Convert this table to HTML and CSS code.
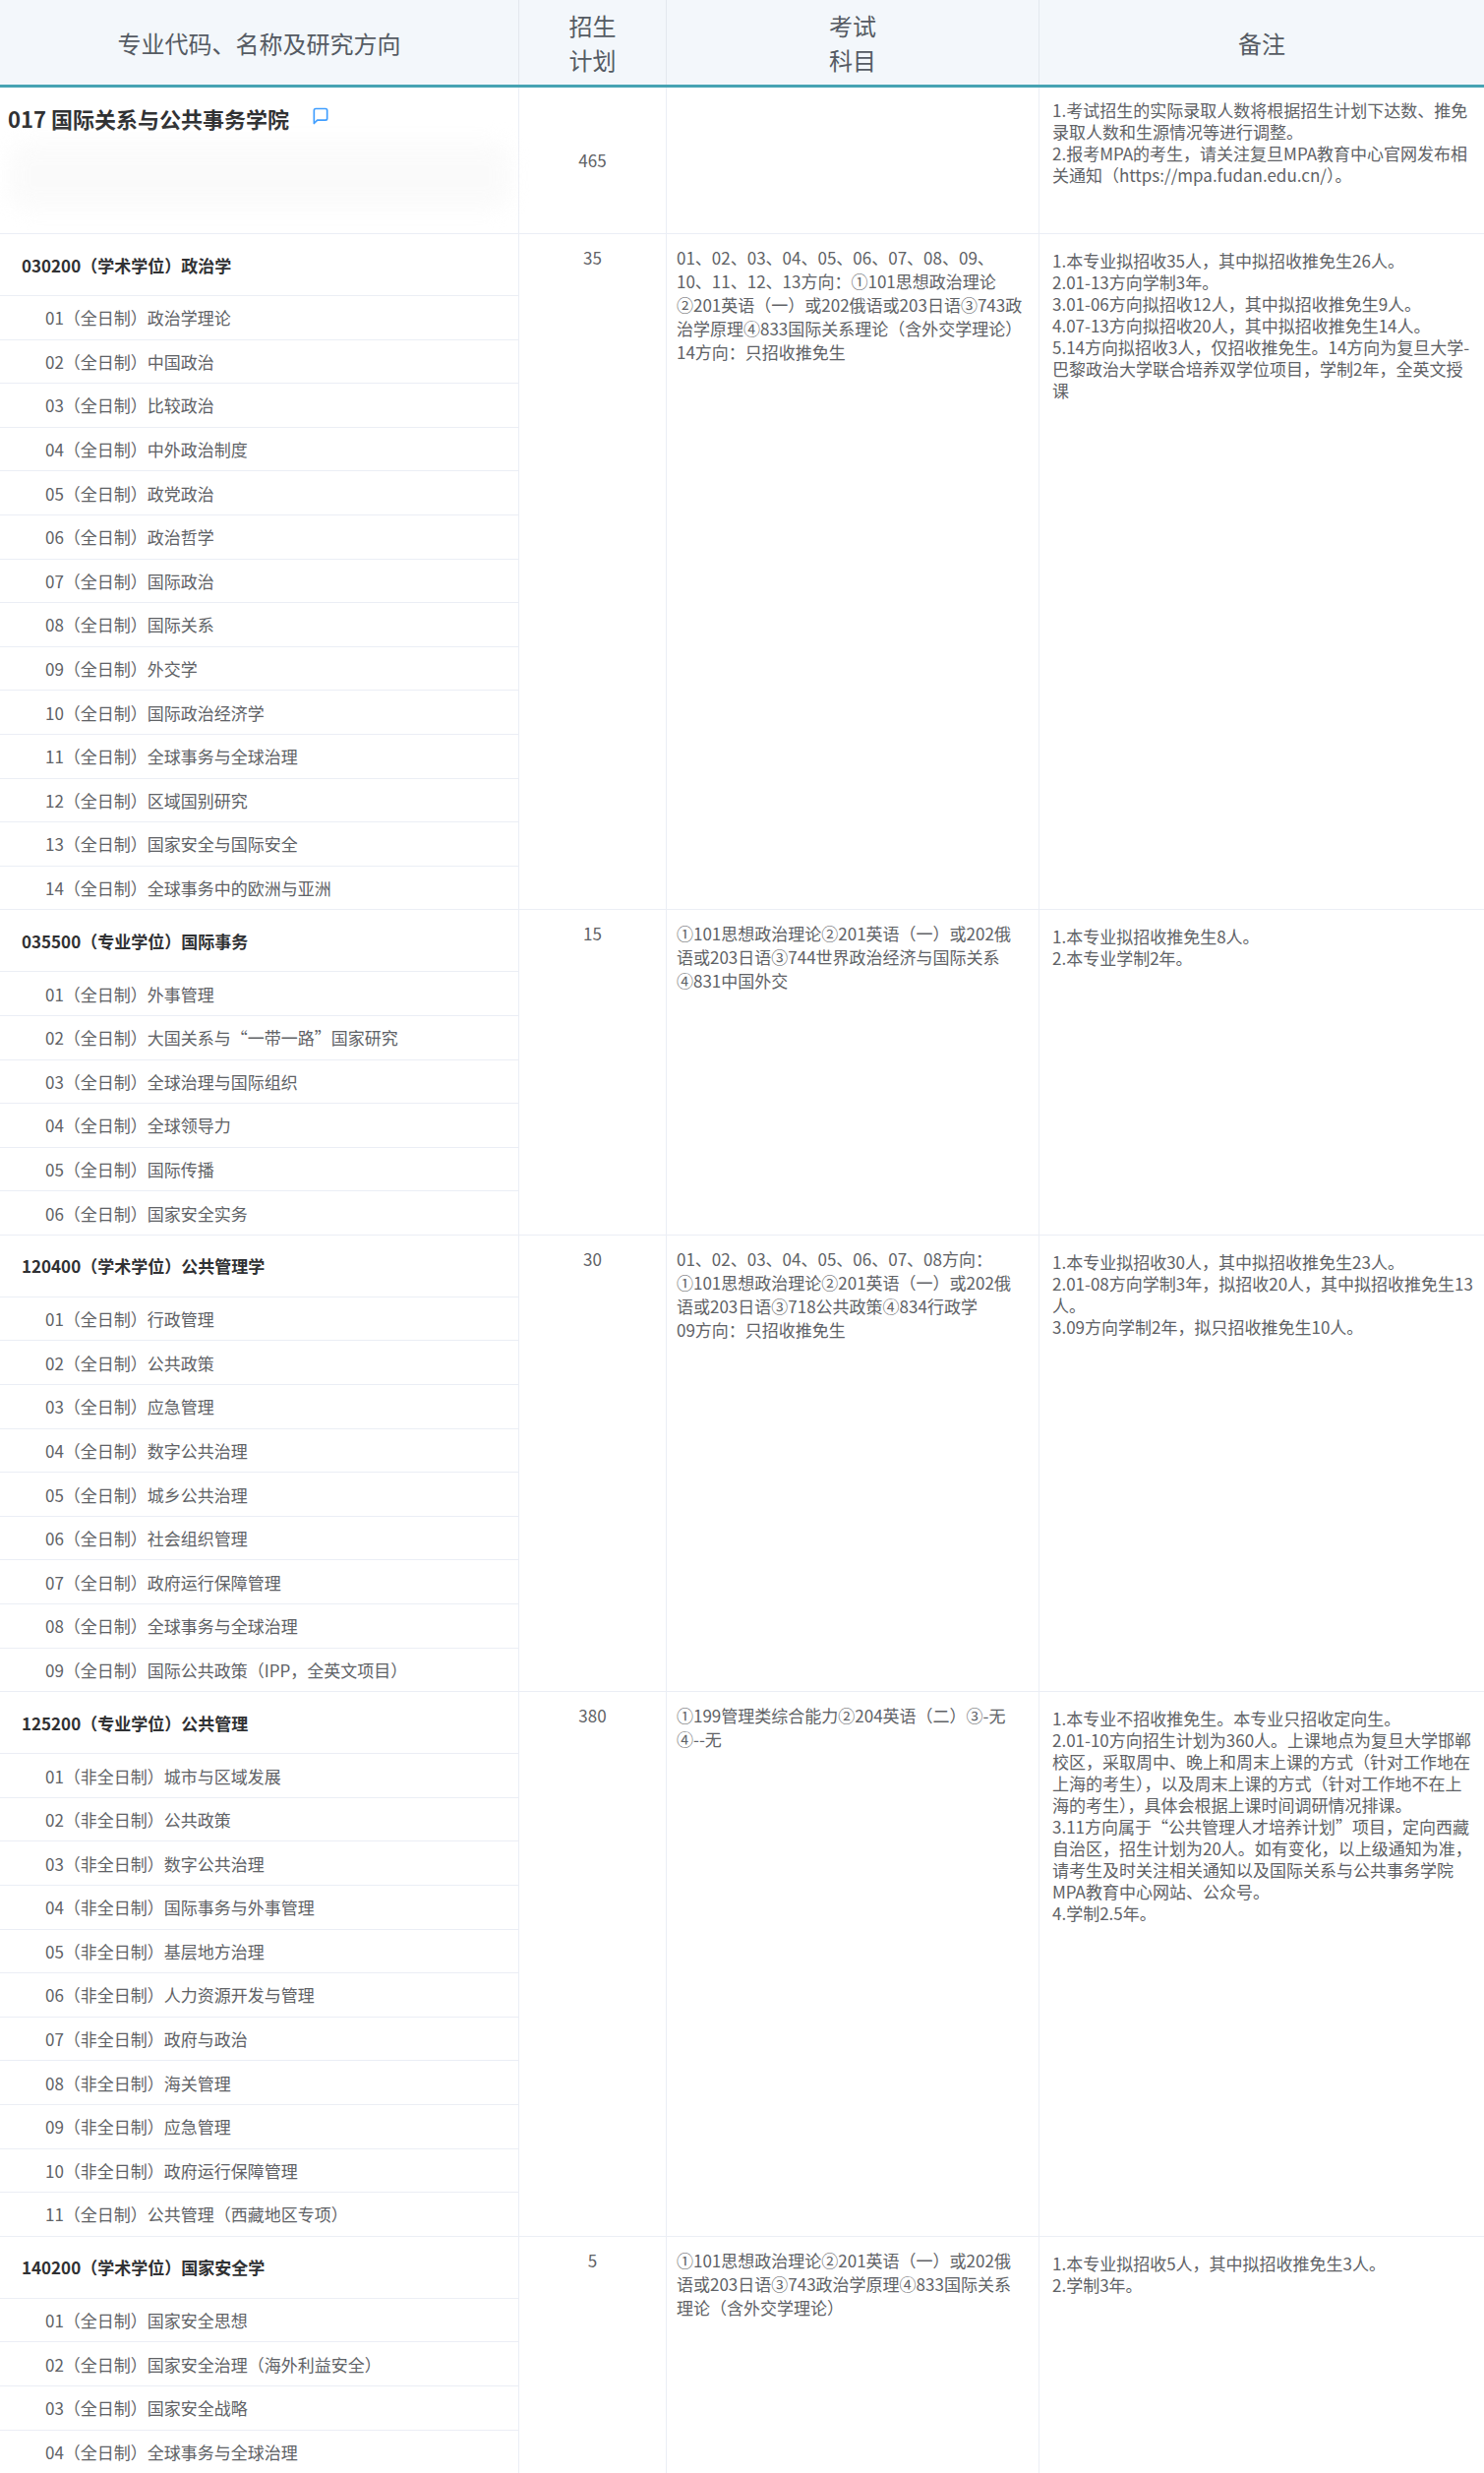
FILE: index.html
```html
<!DOCTYPE html>
<html lang="zh-CN">
<head>
<meta charset="utf-8">
<title>专业目录</title>
<link rel="stylesheet" href="styles.css">
</head>
<body>
<div class="table">
  <div class="row thead">
    <div class="th">专业代码、名称及研究方向</div>
    <div class="th">招生<br>计划</div>
    <div class="th">考试<br>科目</div>
    <div class="th">备注</div>
  </div>

  <div class="row school">
    <div class="cell school-name">
      <div class="school-title">017 国际关系与公共事务学院
        <svg class="icon-msg" viewBox="0 0 24 24" width="20" height="20"><path d="M20 15a2 2 0 0 1-2 2H8l-4 4V5a2 2 0 0 1 2-2h12a2 2 0 0 1 2 2z" fill="none" stroke="#409eff" stroke-width="2" stroke-linejoin="round"/></svg>
      </div>
      <div class="blur"></div>
    </div>
    <div class="cell plan plan-center">465</div>
    <div class="cell exam"></div>
    <div class="cell note note-school">1.考试招生的实际录取人数将根据招生计划下达数、推免<br>录取人数和生源情况等进行调整。<br>2.报考MPA的考生，请关注复旦MPA教育中心官网发布相<br>关通知（https://mpa.fudan.edu.cn/）。</div>
  </div>

  <div class="row block">
    <div class="cell names">
      <div class="major">030200（学术学位）政治学</div>
      <div class="dir">01（全日制）政治学理论</div>
      <div class="dir">02（全日制）中国政治</div>
      <div class="dir">03（全日制）比较政治</div>
      <div class="dir">04（全日制）中外政治制度</div>
      <div class="dir">05（全日制）政党政治</div>
      <div class="dir">06（全日制）政治哲学</div>
      <div class="dir">07（全日制）国际政治</div>
      <div class="dir">08（全日制）国际关系</div>
      <div class="dir">09（全日制）外交学</div>
      <div class="dir">10（全日制）国际政治经济学</div>
      <div class="dir">11（全日制）全球事务与全球治理</div>
      <div class="dir">12（全日制）区域国别研究</div>
      <div class="dir">13（全日制）国家安全与国际安全</div>
      <div class="dir">14（全日制）全球事务中的欧洲与亚洲</div>
    </div>
    <div class="cell plan">35</div>
    <div class="cell exam">01、02、03、04、05、06、07、08、09、<br>10、11、12、13方向：①101思想政治理论<br>②201英语（一）或202俄语或203日语③743政<br>治学原理④833国际关系理论（含外交学理论）<br>14方向：只招收推免生</div>
    <div class="cell note">1.本专业拟招收35人，其中拟招收推免生26人。<br>2.01-13方向学制3年。<br>3.01-06方向拟招收12人，其中拟招收推免生9人。<br>4.07-13方向拟招收20人，其中拟招收推免生14人。<br>5.14方向拟招收3人，仅招收推免生。14方向为复旦大学-<br>巴黎政治大学联合培养双学位项目，学制2年，全英文授<br>课</div>
  </div>

  <div class="row block">
    <div class="cell names">
      <div class="major">035500（专业学位）国际事务</div>
      <div class="dir">01（全日制）外事管理</div>
      <div class="dir">02（全日制）大国关系与“一带一路”国家研究</div>
      <div class="dir">03（全日制）全球治理与国际组织</div>
      <div class="dir">04（全日制）全球领导力</div>
      <div class="dir">05（全日制）国际传播</div>
      <div class="dir">06（全日制）国家安全实务</div>
    </div>
    <div class="cell plan">15</div>
    <div class="cell exam">①101思想政治理论②201英语（一）或202俄<br>语或203日语③744世界政治经济与国际关系<br>④831中国外交</div>
    <div class="cell note">1.本专业拟招收推免生8人。<br>2.本专业学制2年。</div>
  </div>

  <div class="row block">
    <div class="cell names">
      <div class="major">120400（学术学位）公共管理学</div>
      <div class="dir">01（全日制）行政管理</div>
      <div class="dir">02（全日制）公共政策</div>
      <div class="dir">03（全日制）应急管理</div>
      <div class="dir">04（全日制）数字公共治理</div>
      <div class="dir">05（全日制）城乡公共治理</div>
      <div class="dir">06（全日制）社会组织管理</div>
      <div class="dir">07（全日制）政府运行保障管理</div>
      <div class="dir">08（全日制）全球事务与全球治理</div>
      <div class="dir">09（全日制）国际公共政策（IPP，全英文项目）</div>
    </div>
    <div class="cell plan">30</div>
    <div class="cell exam">01、02、03、04、05、06、07、08方向：<br>①101思想政治理论②201英语（一）或202俄<br>语或203日语③718公共政策④834行政学<br>09方向：只招收推免生</div>
    <div class="cell note">1.本专业拟招收30人，其中拟招收推免生23人。<br>2.01-08方向学制3年，拟招收20人，其中拟招收推免生13<br>人。<br>3.09方向学制2年，拟只招收推免生10人。</div>
  </div>

  <div class="row block">
    <div class="cell names">
      <div class="major">125200（专业学位）公共管理</div>
      <div class="dir">01（非全日制）城市与区域发展</div>
      <div class="dir">02（非全日制）公共政策</div>
      <div class="dir">03（非全日制）数字公共治理</div>
      <div class="dir">04（非全日制）国际事务与外事管理</div>
      <div class="dir">05（非全日制）基层地方治理</div>
      <div class="dir">06（非全日制）人力资源开发与管理</div>
      <div class="dir">07（非全日制）政府与政治</div>
      <div class="dir">08（非全日制）海关管理</div>
      <div class="dir">09（非全日制）应急管理</div>
      <div class="dir">10（非全日制）政府运行保障管理</div>
      <div class="dir">11（全日制）公共管理（西藏地区专项）</div>
    </div>
    <div class="cell plan">380</div>
    <div class="cell exam">①199管理类综合能力②204英语（二）③-无<br>④--无</div>
    <div class="cell note">1.本专业不招收推免生。本专业只招收定向生。<br>2.01-10方向招生计划为360人。上课地点为复旦大学邯郸<br>校区，采取周中、晚上和周末上课的方式（针对工作地在<br>上海的考生），以及周末上课的方式（针对工作地不在上<br>海的考生），具体会根据上课时间调研情况排课。<br>3.11方向属于“公共管理人才培养计划”项目，定向西藏<br>自治区，招生计划为20人。如有变化，以上级通知为准，<br>请考生及时关注相关通知以及国际关系与公共事务学院<br>MPA教育中心网站、公众号。<br>4.学制2.5年。</div>
  </div>

  <div class="row block">
    <div class="cell names">
      <div class="major">140200（学术学位）国家安全学</div>
      <div class="dir">01（全日制）国家安全思想</div>
      <div class="dir">02（全日制）国家安全治理（海外利益安全）</div>
      <div class="dir">03（全日制）国家安全战略</div>
      <div class="dir">04（全日制）全球事务与全球治理</div>
    </div>
    <div class="cell plan">5</div>
    <div class="cell exam">①101思想政治理论②201英语（一）或202俄<br>语或203日语③743政治学原理④833国际关系<br>理论（含外交学理论）</div>
    <div class="cell note">1.本专业拟招收5人，其中拟招收推免生3人。<br>2.学制3年。</div>
  </div>
</div>
</body>
</html>
```

FILE: styles.css
```css
* { box-sizing: border-box; }

body {
  margin: 0;
  background: #ffffff;
  color: #606266;
  font-family: "Noto Sans CJK SC", "Microsoft YaHei", sans-serif;
  font-size: 17px;
}

.table {
  width: 1509px;
}

.row {
  display: grid;
  grid-template-columns: 528px 150px 379px 452px;
}

.thead {
  height: 89px;
  background: #f3f7fb;
  border-bottom: 3px solid #46a3b3;
}

.th {
  display: flex;
  align-items: center;
  justify-content: center;
  text-align: center;
  font-size: 24px;
  line-height: 35px;
  color: #555b63;
  border-right: 1px solid #e3e8ee;
}

.th:last-child { border-right: none; }

.cell {
  border-right: 1px solid #ebeef5;
}

.cell:last-child { border-right: none; }

.school {
  height: 149px;
  border-bottom: 1px solid #ebeef5;
}

.school-name {
  padding: 15px 0 0 8px;
}

.school-title {
  display: flex;
  align-items: center;
  gap: 22px;
  font-size: 22px;
  font-weight: 700;
  line-height: 32px;
  color: #303133;
}

.icon-msg {
  flex: none;
  margin-top: -4px;
}

.blur {
  margin: 8px 6px 0 0;
  height: 70px;
  background: #f8f8f8;
  border-radius: 20px;
  filter: blur(10px);
  opacity: 0.6;
}

.plan {
  text-align: center;
  padding-top: 12px;
  line-height: 24px;
}

.plan-center {
  display: flex;
  align-items: center;
  justify-content: center;
  padding-top: 0;
}

.exam {
  padding: 12px 0 0 10px;
  line-height: 24px;
  white-space: nowrap;
}

.note {
  padding: 16px 0 0 13px;
  line-height: 22px;
  white-space: nowrap;
}

.note-school {
  padding-top: 12px;
}

.block {
  border-bottom: 1px solid #ebeef5;
}

.names {
  display: flex;
  flex-direction: column;
}

.major {
  height: 63px;
  display: flex;
  align-items: center;
  padding-left: 22px;
  font-weight: 700;
  color: #303133;
  border-bottom: 1px solid #ebeef5;
}

.dir {
  height: 44.6px;
  display: flex;
  align-items: center;
  padding-left: 46px;
  border-bottom: 1px solid #ebeef5;
}

.dir:last-child {
  height: 43.6px;
  border-bottom: none;
}
```
